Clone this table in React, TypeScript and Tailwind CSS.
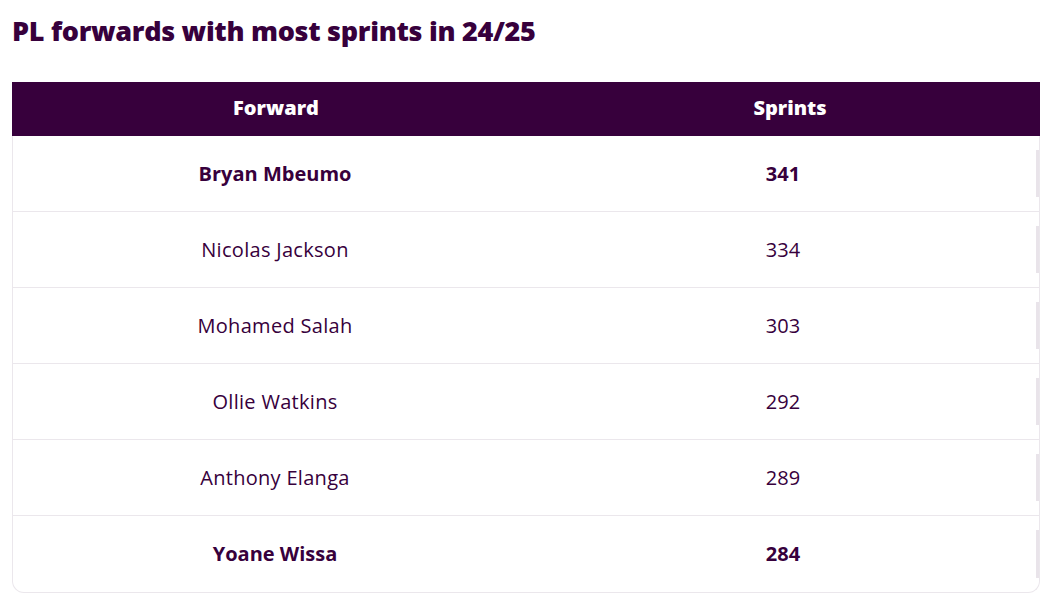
import React from "react";

const rows: { name: string; sprints: string; bold?: boolean }[] = [
  { name: "Bryan Mbeumo", sprints: "341", bold: true },
  { name: "Nicolas Jackson", sprints: "334" },
  { name: "Mohamed Salah", sprints: "303" },
  { name: "Ollie Watkins", sprints: "292" },
  { name: "Anthony Elanga", sprints: "289" },
  { name: "Yoane Wissa", sprints: "284", bold: true },
];

export default function App() {
  return (
    <div
      className="w-[1052px] h-[610px] bg-white text-[#37003c] pl-[12px] pr-[12px] pt-[13px]"
      style={{ fontFamily: "'Open Sans', 'Noto Sans', sans-serif" }}
    >
      <h2 className="text-[27px] leading-[36px] font-extrabold tracking-[-0.3px]">
        PL forwards with most sprints in 24/25
      </h2>
      <div className="mt-[33px] w-[1028px]">
        <div className="grid grid-cols-[528px_500px] h-[54px] pb-[3px] bg-[#37003c] text-white text-[20px] font-extrabold items-center text-center">
          <div>Forward</div>
          <div>Sprints</div>
        </div>
        <div className="border-l border-r border-b border-[#ebe7ec] rounded-b-[12px] overflow-hidden">
          {rows.map((r, i) => (
            <div
              key={r.name}
              className={
                "flex h-[76px] items-stretch " +
                (i < rows.length - 1 ? "border-b border-[#ebe7ec]" : "")
              }
            >
              <div
                className={
                  "w-[524px] flex items-center justify-center text-[20px] " +
                  (r.bold ? "font-bold" : "font-normal tracking-[0.3px]")
                }
              >
                {r.name}
              </div>
              <div
                className={
                  "w-[492px] flex items-center justify-center text-[20px] " +
                  (r.bold ? "font-bold" : "font-normal")
                }
              >
                {r.sprints}
              </div>
              <div className="flex-1 flex justify-end py-[14px]">
                <div className="w-[3px] bg-[#e9e4ea]" />
              </div>
            </div>
          ))}
        </div>
      </div>
    </div>
  );
}
